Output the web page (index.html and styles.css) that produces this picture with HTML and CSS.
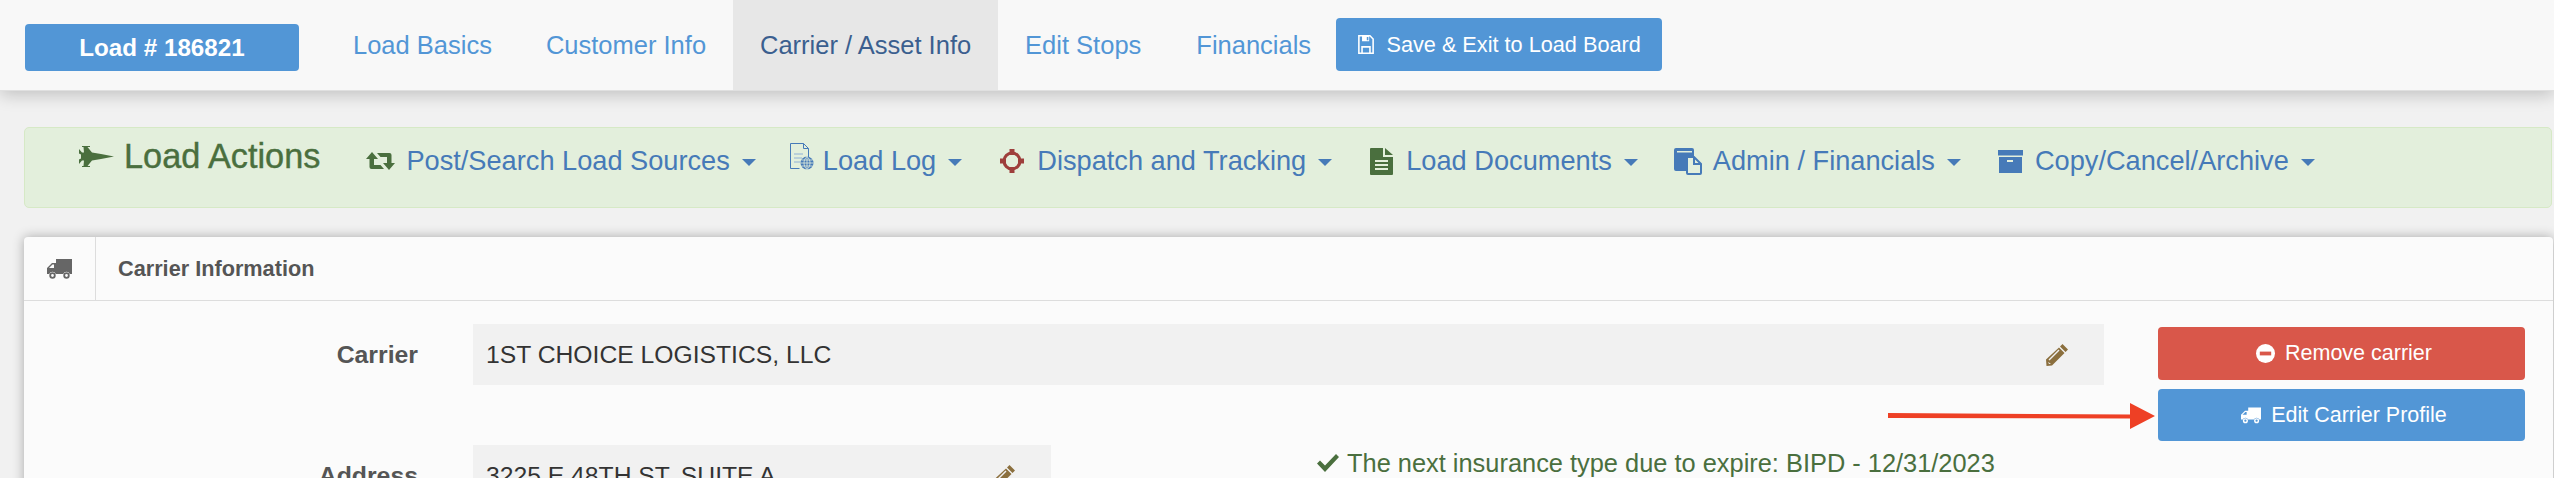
FILE: index.html
```html
<!DOCTYPE html>
<html lang="en">
<head>
  <meta charset="UTF-8" />
  <title>Load 186821 - Carrier / Asset Info</title>
  <link rel="stylesheet" href="styles.css">
</head>
<body>

  <nav class="topnav">
    <a class="load-badge">Load # 186821</a>
    <a class="nav-link link-basics">Load Basics</a>
    <a class="nav-link link-customer">Customer Info</a>
    <a class="nav-link active">Carrier / Asset Info</a>
    <a class="nav-link link-stops">Edit Stops</a>
    <a class="nav-link link-financials">Financials</a>
    <a class="btn-save">
      <svg class="ico-save" viewBox="0 0 20 24"><path fill="none" stroke="#fff" stroke-width="2" d="M1 1h14l4 4v18H1z"/><path fill="#fff" d="M5 1h9v7H5zM4 14h12v9H4z"/><path fill="#5296d6" d="M11 2.500h2v4h-2zM6 16h8v6H6z"/></svg>
      Save &amp; Exit to Load Board
    </a>
  </nav>

  <div class="actions">
    <h2 class="actions-title">
      <svg class="ico-jet" viewBox="0 0 35 21"><path d="M35 10.500 22 8 13 6.500 8.500 1H11V0H3v1h1.500L5 6.500H3L0 3v4.500l2 1v4l-2 1V18l3-3.500h2L4.500 20H3v1h8v-1H8.500l4.500-5.500L22 13z"/></svg>
      Load Actions
    </h2>
    <a class="action action-post">
      <svg class="ico-retweet" viewBox="0 0 29 18"><path d="M6 0 0 7h3.500v8a2 2 0 0 0 2 2H18l-3.500-4H8V7h4z"/><path d="M23 18l6-7h-3.500V3a2 2 0 0 0-2-2H11l3.500 4H21v6h-4z"/></svg>
      Post/Search Load Sources<i class="caret"></i>
    </a>
    <a class="action action-log">
      <svg class="ico-log" viewBox="0 0 24 27"><path fill="none" stroke="#467ab8" d="M.500.500h13l5 5v11M.500.500v25h9"/><path fill="none" stroke="#467ab8" d="M13.500.500v5h5"/><path fill="none" stroke="#8fb0d6" d="M4 11h9M4 15h8M4 19h6"/><circle cx="17" cy="20" r="6.500" fill="#467ab8"/><path fill="none" stroke="#e3efdc" stroke-width=".8" d="M10.500 20h13M17 13.500v13M11.500 17h11M11.500 23h11M17 13.500c-4 3-4 10 0 13M17 13.500c4 3 4 10 0 13"/></svg>
      Load Log<i class="caret"></i>
    </a>
    <a class="action action-track">
      <svg class="ico-target" viewBox="0 0 24 24"><circle cx="12" cy="12" r="8" fill="none" stroke="#9e3f3c" stroke-width="3"/><path fill="#9e3f3c" d="M9.500 0h5v6h-5zM9.500 18h5v6h-5zM0 9.500h6v5H0zM18 9.500h6v5h-6z"/></svg>
      Dispatch and Tracking<i class="caret"></i>
    </a>
    <a class="action action-docs">
      <svg class="ico-doc" viewBox="0 0 23 27"><path fill="#4a6f3e" d="M0 1a1 1 0 0 1 1-1h12v9h10v17a1 1 0 0 1-1 1H1a1 1 0 0 1-1-1z"/><path fill="#4a6f3e" d="M15 0l8 7h-8z"/><path fill="#e3efdc" d="M5 12h13v2H5zM5 16h13v2H5zM5 20h13v2H5z"/></svg>
      Load Documents<i class="caret"></i>
    </a>
    <a class="action action-admin">
      <svg class="ico-files" viewBox="0 0 28 27"><path fill="#467ab8" d="M2 0h16a2 2 0 0 1 2 2v6h-6l-2 2v13H2a2 2 0 0 1-2-2V2a2 2 0 0 1 2-2z"/><path fill="#e3efdc" d="M3 3h15v1.500H3z"/><path fill="#e3efdc" stroke="#467ab8" stroke-width="2" d="M13 9h7l7 7v9a1 1 0 0 1-1 1H14a1 1 0 0 1-1-1z"/><path fill="none" stroke="#467ab8" stroke-width="2" d="M20 9v7h7"/></svg>
      Admin / Financials<i class="caret"></i>
    </a>
    <a class="action action-copy">
      <svg class="ico-box" viewBox="0 0 25 23"><path fill="#467ab8" d="M0 0h25v5.500H0zM1 7h23v16H1z"/><path fill="#e3efdc" d="M9 10h6v2H9z"/></svg>
      Copy/Cancel/Archive<i class="caret"></i>
    </a>
  </div>

  <section class="card">
    <header class="card-head">
      <span class="card-icon">
        <svg class="ico-truck" viewBox="0 0 25 20"><path fill="#666" d="M9 0h16v15h-2.200a3.500 3.500 0 0 0-6.600 0H8.800a3.500 3.500 0 0 0-6.600 0H0V9l5-5h4z"/><circle cx="5.500" cy="16.500" r="2.300" fill="none" stroke="#666" stroke-width="1.800"/><circle cx="19.500" cy="16.500" r="2.300" fill="none" stroke="#666" stroke-width="1.800"/><path fill="#fbfbfb" d="M2 9l3.500-3.500H7V9z"/></svg>
      </span>
      <h3 class="card-title">Carrier Information</h3>
    </header>

    <div class="card-body">
      <div class="rows">
        <div class="row">
          <label class="row-label">Carrier</label>
          <div class="field field-wide">
            1ST CHOICE LOGISTICS, LLC
            <svg class="ico-pencil" viewBox="0 0 22 22"><path fill="#8b6f3e" d="M16.500 0 22 5.500 19.500 8 14 2.500zM13 3.500 18.500 9 6 21.500.5 22 0 15.500z"/><path fill="#f1f1f1" d="M2.500 15.500 12.500 5.500l1 1-10 10zM2 18l1 2 2-.2z"/></svg>
          </div>
        </div>
        <div class="row row-address">
          <label class="row-label">Address</label>
          <div class="field field-short">
            3225 E 48TH ST, SUITE A
            <svg class="ico-pencil" viewBox="0 0 22 22"><path fill="#8b6f3e" d="M16.500 0 22 5.500 19.500 8 14 2.500zM13 3.500 18.500 9 6 21.500.5 22 0 15.500z"/><path fill="#f1f1f1" d="M2.500 15.500 12.500 5.500l1 1-10 10zM2 18l1 2 2-.2z"/></svg>
          </div>
          <p class="insurance">
            <svg class="ico-check" viewBox="0 0 22 18"><path fill="#4a6f3e" d="M0 9.500 3 6.500l5 5L19 0l3 3L8 18z"/></svg>
            The next insurance type due to expire: BIPD - 12/31/2023
          </p>
        </div>
      </div>
      <div class="side-btns">
        <a class="btn btn-remove">
          <svg class="ico-minus" viewBox="0 0 20 20"><circle cx="10" cy="10" r="10" fill="#fff"/><path fill="#d9574a" d="M4 8h12v4H4z"/></svg>
          Remove carrier
        </a>
        <a class="btn btn-edit">
          <svg class="ico-truck-w" viewBox="0 0 25 20"><path fill="#fff" d="M9 0h16v15h-2.200a3.500 3.500 0 0 0-6.600 0H8.800a3.500 3.500 0 0 0-6.600 0H0V9l5-5h4z"/><circle cx="5.500" cy="16.500" r="2.300" fill="none" stroke="#fff" stroke-width="1.800"/><circle cx="19.500" cy="16.500" r="2.300" fill="none" stroke="#fff" stroke-width="1.800"/><path fill="#5296d6" d="M2 9l3.500-3.500H7V9z"/></svg>
          Edit Carrier Profile
        </a>
      </div>
    </div>

    <!-- red arrow drawn over the card -->
    <svg class="arrow" viewBox="0 0 267 26"><path fill="#ee4025" d="M0 10 242 11.500V0L267 13 242 26V15.500L0 15z"/></svg>
  </section>

</body>
</html>
```

FILE: styles.css
```css
* {
  box-sizing: border-box;
}

html, body {
  height: 100%;
}

body {
  margin: 0;
  background: #f1f1f1;
  font-family: "Liberation Sans", Arial, sans-serif;
  color: #333;
  overflow: hidden;
}

svg {
  display: block;
  flex: none;
}

/* top bar */
.topnav {
  display: flex;
  align-items: center;
  height: 91px;
  padding-left: 25px;
  background: #f8f8f8;
  border-bottom: 1px solid #e0e0e0;
  box-shadow: 0 4px 16px rgba(0, 0, 0, 0.2);
  position: relative;
}

.load-badge {
  width: 274px;
  height: 47px;
  margin-top: 5px;
  line-height: 47px;
  text-align: center;
  font-size: 24.200px;
  font-weight: bold;
  color: #fff;
  background: #5296d6;
  border-radius: 4px;
}

.nav-link {
  font-size: 25.500px;
  color: #5296d6;
}

.link-basics { margin-left: 54px; }
.link-customer { margin-left: 54px; }
.link-stops { margin-left: 27px; }
.link-financials { margin-left: 55px; }

.nav-link.active {
  width: 265px;
  height: 90px;
  margin-left: 27px;
  line-height: 90px;
  text-align: center;
  color: #3b5f8f;
  background: #e7e7e7;
}

.btn-save {
  display: flex;
  align-items: center;
  justify-content: center;
  gap: 11px;
  width: 326px;
  height: 53px;
  margin-left: 25px;
  margin-bottom: 1px;
  font-size: 21.700px;
  color: #fff;
  background: #5296d6;
  border-radius: 4px;
}

.ico-save {
  width: 18px;
  height: 19px;
}

/* load actions */
.actions {
  display: flex;
  height: 81px;
  margin: 36px 2px 0 24px;
  padding-left: 54px;
  background: #e3efdc;
  border: 1px solid #d6e9c6;
  border-radius: 5px;
}

.actions-title {
  display: flex;
  align-items: center;
  gap: 10px;
  height: 56px;
  margin: 0;
  font-size: 34.300px;
  font-weight: normal;
  -webkit-text-stroke: 0.4px #4a6f3e;
  color: #4a6f3e;
}

.ico-jet {
  width: 35px;
  height: 21px;
  fill: #4a6f3e;
}

.action {
  display: flex;
  align-items: center;
  height: 66px;
  font-size: 27.200px;
  color: #467ab8;
}

.action-post { margin-left: 46px; }
.action-log { margin-left: 34px; }
.action-track { margin-left: 38px; }
.action-docs { margin-left: 38px; }
.action-admin { margin-left: 36px; }
.action-copy { margin-left: 37px; }

.ico-retweet { width: 29px; height: 18px; margin-right: 11px; fill: #4a6f3e; }
.ico-log { width: 24px; height: 27px; margin-right: 9px; margin-bottom: 9px; }
.ico-target { width: 24px; height: 24px; margin-right: 13px; }
.ico-doc { width: 23px; height: 27px; margin-right: 13px; }
.ico-files { width: 28px; height: 27px; margin-right: 11px; }
.ico-box { width: 25px; height: 23px; margin-right: 12px; }

.caret {
  width: 0;
  height: 0;
  margin: 3px 0 0 12px;
  border-top: 7px solid #467ab8;
  border-left: 7px solid transparent;
  border-right: 7px solid transparent;
}

/* carrier card */
.card {
  position: relative;
  margin: 29px 1px 0 24px;
  background: #fbfbfb;
  border-radius: 4px 4px 0 0;
  box-shadow: 0 0 12px rgba(0, 0, 0, 0.3);
}

.card-head {
  display: flex;
  align-items: center;
  height: 64px;
  border-bottom: 1px solid #ddd;
}

.card-icon {
  display: flex;
  align-items: center;
  justify-content: center;
  width: 72px;
  height: 100%;
  border-right: 1px solid #ddd;
}

.ico-truck { width: 25px; height: 20px; }

.card-title {
  margin: 1px 0 0 22px;
  font-size: 21.700px;
  color: #555;
}

.card-body {
  display: flex;
  padding: 23px 28px 0 0;
}

.rows {
  flex: 1;
}

.row {
  display: flex;
  height: 61px;
}

.row-address {
  margin-top: 60px;
}

.row-label {
  width: 394px;
  align-self: center;
  text-align: right;
  font-size: 24.800px;
  font-weight: bold;
  color: #555;
}

.field {
  display: flex;
  align-items: center;
  justify-content: space-between;
  margin-left: 55px;
  padding: 0 36px 0 13px;
  font-size: 24.700px;
  background: #f1f1f1;
}

.field-wide { width: 1631px; }
.field-short { width: 578px; }

.ico-pencil {
  width: 22px;
  height: 22px;
}

.insurance {
  display: flex;
  align-items: center;
  gap: 8px;
  height: 36px;
  margin: 0 0 0 266px;
  font-size: 25.400px;
  white-space: nowrap;
  color: #4a6f3e;
}

.ico-check { width: 22px; height: 18px; }

.side-btns {
  display: flex;
  flex-direction: column;
  gap: 9px;
  width: 367px;
  margin-top: 3px;
  margin-left: 54px;
  flex: none;
}

.btn {
  display: flex;
  align-items: center;
  justify-content: center;
  gap: 10px;
  padding-left: 5px;
  font-size: 21.500px;
  color: #fff;
  border-radius: 4px;
}

.btn-remove { height: 53px; background: #d9574a; }
.btn-edit { height: 52px; background: #5296d6; }

.ico-minus { width: 19px; height: 19px; }
.ico-truck-w { width: 20px; height: 17px; }

.arrow {
  position: absolute;
  left: 1864px;
  top: 166px;
  width: 267px;
  height: 26px;
}
```
